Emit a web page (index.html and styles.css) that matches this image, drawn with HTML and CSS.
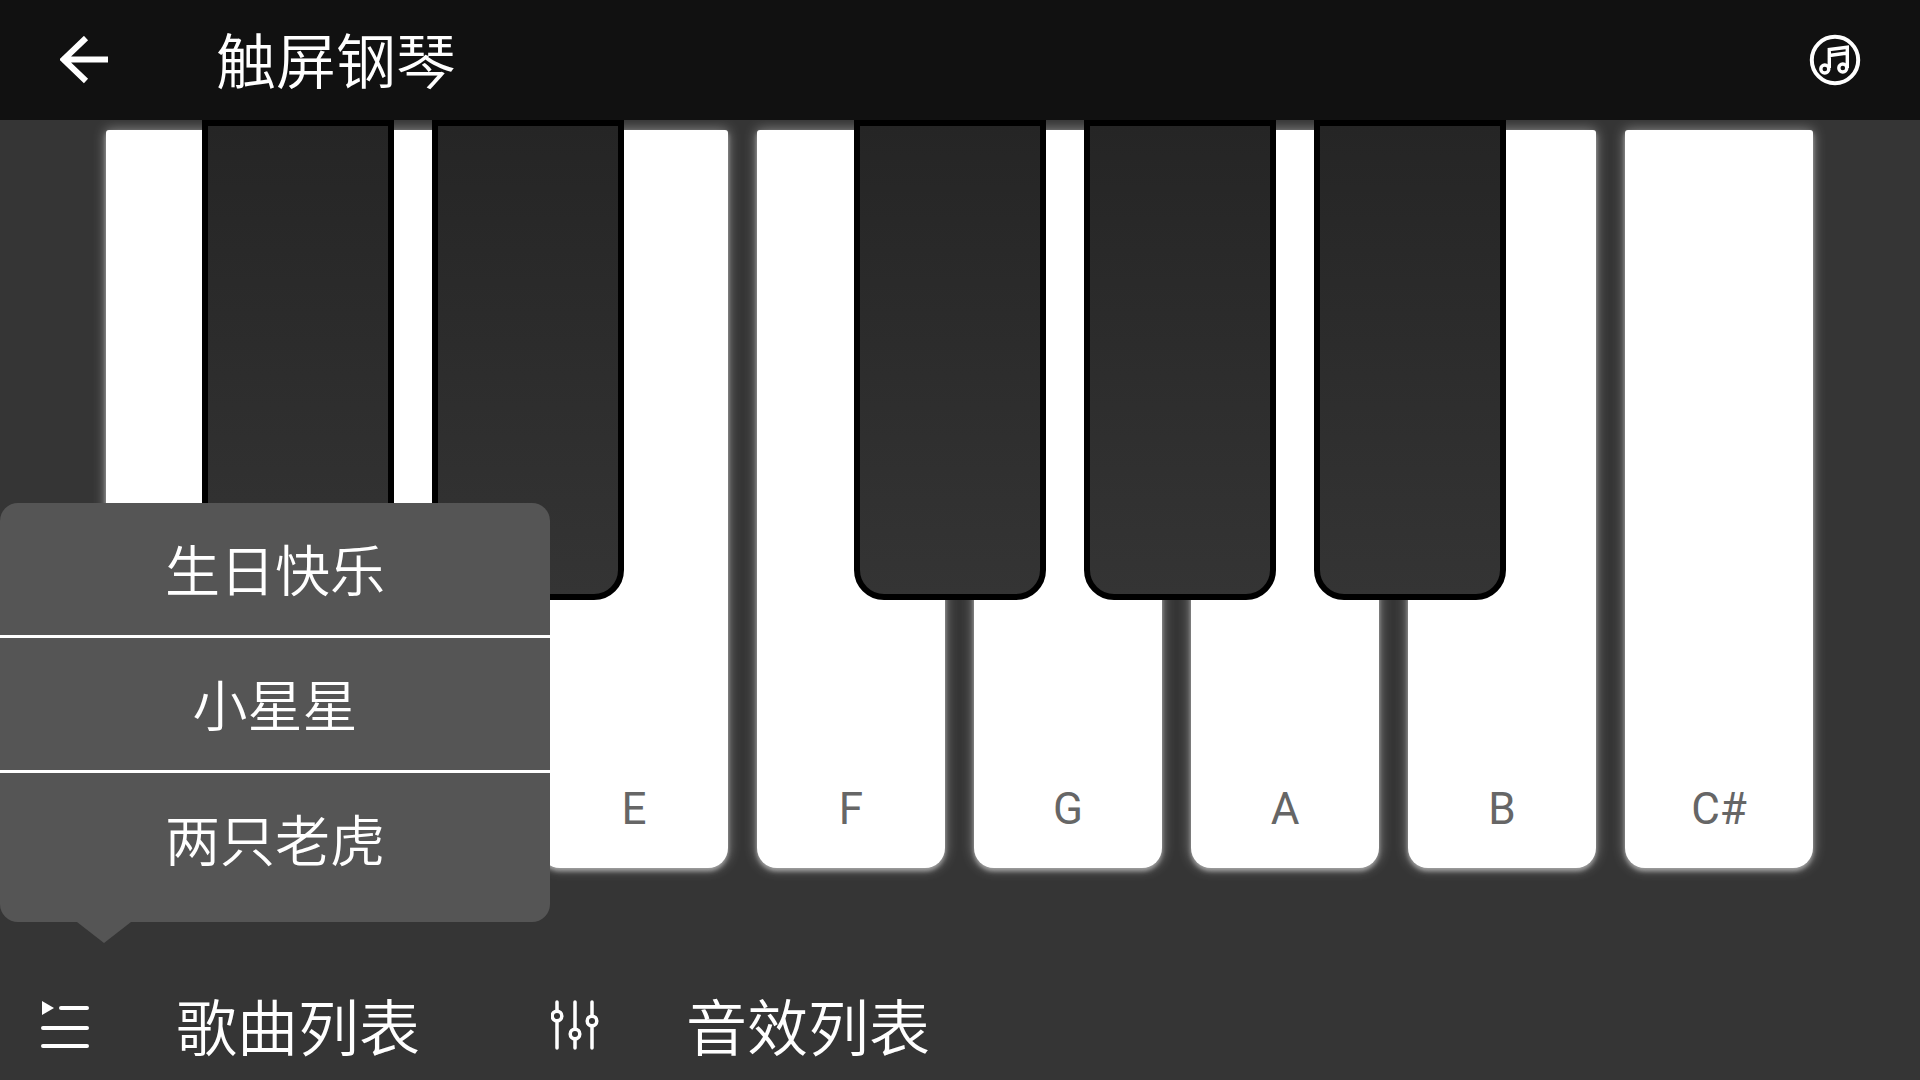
FILE: index.html
```html
<!DOCTYPE html>
<html lang="zh-CN">
<head>
<meta charset="utf-8">
<title>触屏钢琴</title>
<link rel="stylesheet" href="styles.css">
</head>
<body>
<div class="app">
  <header class="topbar">
    <svg class="icon-back" viewBox="0 0 48 48" width="48" height="48"><path d="M2 23.500H48M26 2 3.500 23.500 26 45" fill="none" stroke="#fff" stroke-width="6"/></svg>
    <h1 class="title">触屏钢琴</h1>
    <svg class="icon-music" viewBox="0 0 60 60" width="60" height="60">
      <circle cx="30" cy="30" r="23.200" fill="none" stroke="#fff" stroke-width="4"/>
      <path d="M24.300 38V19.500L42.300 17.200V38M24.300 25.500 42.300 23" fill="none" stroke="#fff" stroke-width="3.400"/>
      <circle cx="19.800" cy="39" r="4" fill="none" stroke="#fff" stroke-width="3.400"/>
      <circle cx="37.800" cy="38" r="4" fill="none" stroke="#fff" stroke-width="3.400"/>
    </svg>
  </header>

  <main class="stage">
    <div class="whites">
      <div class="white-key"></div>
      <div class="white-key"></div>
      <div class="white-key"><span>E</span></div>
      <div class="white-key"><span>F</span></div>
      <div class="white-key"><span>G</span></div>
      <div class="white-key"><span>A</span></div>
      <div class="white-key"><span>B</span></div>
      <div class="white-key"><span>C#</span></div>
    </div>
    <div class="blacks">
      <div class="black-group">
        <div class="black-key"></div>
        <div class="black-key"></div>
      </div>
      <div class="black-group">
        <div class="black-key"></div>
        <div class="black-key"></div>
        <div class="black-key"></div>
      </div>
    </div>
    <div class="popup">
      <div class="popup-item">生日快乐</div>
      <div class="popup-item">小星星</div>
      <div class="popup-item">两只老虎</div>
    </div>
  </main>

  <footer class="bottombar">
    <div class="tab tab-songs">
      <svg class="tab-icon" viewBox="0 0 50 50" width="50" height="50">
        <path d="M0 0 12 7 0 14Z" fill="#fff" transform="translate(1 1)"/>
        <path d="M20 8H46M2 28H46M2 46H46" fill="none" stroke="#fff" stroke-width="4" stroke-linecap="round"/>
      </svg>
      <span>歌曲列表</span>
    </div>
    <div class="tab tab-effects">
      <svg class="tab-icon" viewBox="0 0 50 50" width="50" height="50">
        <path d="M6 2V48M24 2V48M41 2V48" fill="none" stroke="#fff" stroke-width="3.500" stroke-linecap="round"/>
        <circle cx="6" cy="16" r="4.800" fill="#353535" stroke="#fff" stroke-width="3.500"/>
        <circle cx="24" cy="34" r="4.800" fill="#353535" stroke="#fff" stroke-width="3.500"/>
        <circle cx="41" cy="21" r="4.800" fill="#353535" stroke="#fff" stroke-width="3.500"/>
      </svg>
      <span>音效列表</span>
    </div>
  </footer>
</div>
</body>
</html>
```
FILE: styles.css
```css
* { box-sizing: border-box; }
html, body { margin: 0; padding: 0; }
body {
  width: 1920px;
  height: 1080px;
  overflow: hidden;
  background: #353535;
  color: #fff;
  font-family: "Noto Sans CJK SC", "Noto Sans", sans-serif;
}
.app {
  width: 1920px;
  height: 1080px;
  display: flex;
  flex-direction: column;
}
.topbar {
  height: 120px;
  flex: none;
  background: #111;
  display: flex;
  align-items: center;
  padding: 0 55px 0 60px;
  position: relative;
  z-index: 3;
}
.icon-back { flex: none; }
.title {
  margin: 0 0 4px 108px;
  font-size: 60px;
  font-weight: 350;
  line-height: 100px;
  flex: 1;
}
.icon-music { flex: none; }

.stage {
  position: relative;
  flex: 1;
  min-height: 0;
}
.whites {
  display: flex;
  gap: 29px;
  padding: 10px 0 0 106px;
}
.white-key {
  width: 188px;
  height: 738px;
  background: #fff;
  border-radius: 3px 3px 20px 20px;
  box-shadow: 0 3px 4px #a0a0a0, 0 0 13px rgba(255,255,255,.45);
  display: flex;
  align-items: flex-end;
  justify-content: center;
  padding-bottom: 29px;
}
.white-key span {
  font-family: Roboto, sans-serif;
  font-size: 44px;
  line-height: 60px;
  color: #666;
}
.blacks {
  position: absolute;
  top: 0;
  left: 202px;
  display: flex;
  gap: 230px;
  z-index: 1;
}
.black-group {
  display: flex;
  gap: 38px;
}
.black-key {
  width: 192px;
  height: 480px;
  background: linear-gradient(#252525, #343434);
  border: 6px solid #000;
  border-radius: 0 0 30px 30px;
}
.popup {
  position: absolute;
  left: 0;
  top: 383px;
  width: 550px;
  height: 419px;
  background: #555;
  border-radius: 18px;
  z-index: 2;
}
.popup::after {
  content: "";
  position: absolute;
  left: 77px;
  top: 100%;
  width: 0;
  height: 0;
  border-left: 27px solid transparent;
  border-right: 27px solid transparent;
  border-top: 21px solid #555;
}
.popup-item {
  height: 135px;
  line-height: 128px;
  text-align: center;
  font-size: 55px;
  font-weight: 350;
  border-bottom: 3px solid #fff;
}
.popup-item:last-child { border-bottom: 0; }

.bottombar {
  height: 110px;
  flex: none;
  display: flex;
  align-items: center;
  padding-left: 41px;
}
.tab {
  display: flex;
  align-items: center;
  font-size: 61px;
  font-weight: 350;
  line-height: 108px;
}
.tab-songs { width: 510px; }
.tab-songs .tab-icon { margin-right: 85px; }
.tab-effects .tab-icon { margin-right: 85px; }
.tab-icon { flex: none; }
```
